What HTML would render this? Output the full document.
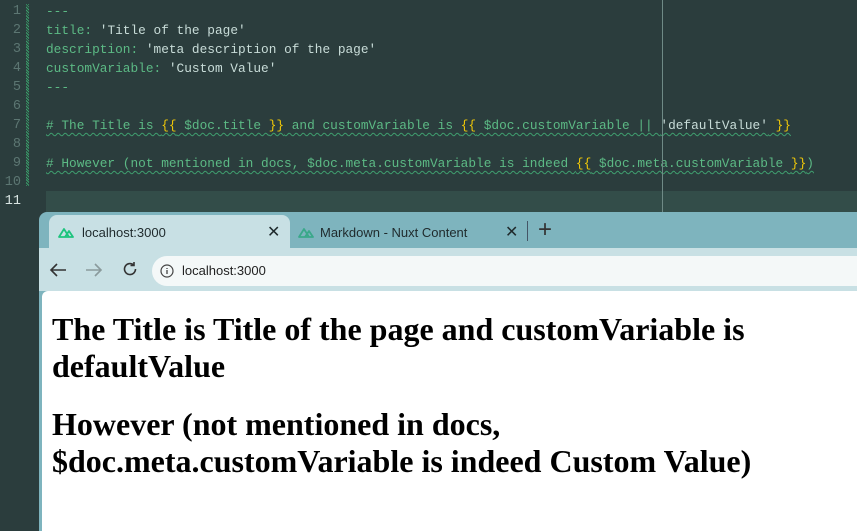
<!DOCTYPE html>
<html><head><meta charset="utf-8"><style>
*{margin:0;padding:0;box-sizing:border-box}
html,body{width:857px;height:531px;overflow:hidden}
body{background:#2b3d3d;position:relative;font-family:"Liberation Sans",sans-serif}
.ln{position:absolute;left:0;width:21px;text-align:right;font:13.5px/19px "Liberation Mono",monospace;color:#5c7672}
.code{position:absolute;left:46px;font:12.8px/19px "Liberation Mono",monospace;color:#5cba85;white-space:pre}
.s{color:#c8dcd8}.y{color:#f0c808}
.sq{text-decoration:underline wavy #3f9f6f;text-decoration-thickness:1px;text-underline-offset:3px}
.gut{position:absolute;left:26px;top:4px;width:3px;height:182px;background:repeating-linear-gradient(45deg,#3a9e6a 0 1px,#2b3d3d 1px 2px)}
.cur{position:absolute;left:46px;top:191px;width:811px;height:21px;background:#334d49}
.rul{position:absolute;left:662px;top:0;width:1px;height:212px;background:#6f8a86}
.win{position:absolute;left:39px;top:212px;width:818px;height:319px;background:#7eb4be;border-radius:8px 0 0 0;overflow:hidden}
.tab{position:absolute;left:10px;top:3px;width:241px;height:37px;background:#c8e0e4;border-radius:8px 8px 0 0;font-size:13px;color:#1f2a2c}
.bar{position:absolute;left:0;top:36px;width:818px;height:43px;background:#c8e0e4}
.url{position:absolute;left:113px;top:8px;width:720px;height:30px;background:#f4f8f8;border-radius:15px;font-size:13px;color:#222}
.content{position:absolute;left:3px;top:79px;width:815px;height:260px;background:#fff;border-radius:6px 0 0 0}
h1{font:bold 32px/37px "Liberation Serif",serif;color:#000;padding-left:10px;width:770px}
</style></head><body>
<div class="ln" style="top:2px">1</div><div class="ln" style="top:21px">2</div><div class="ln" style="top:40px">3</div><div class="ln" style="top:59px">4</div><div class="ln" style="top:78px">5</div><div class="ln" style="top:97px">6</div><div class="ln" style="top:116px">7</div><div class="ln" style="top:135px">8</div><div class="ln" style="top:154px">9</div><div class="ln" style="top:173px">10</div><div class="ln" style="top:192px;color:#d8e4e2">11</div>
<div class="gut"></div>
<div class="cur"></div>
<div class="code" style="top:2px">---
title: <span class="s">'Title of the page'</span>
description: <span class="s">'meta description of the page'</span>
customVariable: <span class="s">'Custom Value'</span>
---

<span class="sq"># The Title is <span class="y">{{</span> $doc.title <span class="y">}}</span> and customVariable is <span class="y">{{</span> $doc.customVariable || <span class="s">'defaultValue'</span> <span class="y">}}</span></span>

<span class="sq"># However (not mentioned in docs, $doc.meta.customVariable is indeed <span class="y">{{</span> $doc.meta.customVariable <span class="y">}}</span>)</span>
</div>
<div class="rul"></div>
<div class="win">
 <div class="tab">
  <svg style="position:absolute;left:9px;top:12px" width="16" height="11" viewBox="0 0 16 11"><path d="M1 10 L6 2 L11 10 Z M7 10 L11 4 L15 10 Z" fill="none" stroke="#1ec47e" stroke-width="1.8" stroke-linejoin="round"/></svg>
  <span style="position:absolute;left:33px;top:10px">localhost:3000</span>
  <span style="position:absolute;left:218px;top:7px;font-size:16px">✕</span>
 </div>
 <svg style="position:absolute;left:259px;top:15px" width="16" height="11" viewBox="0 0 16 11"><path d="M1 10 L6 2 L11 10 Z M7 10 L11 4 L15 10 Z" fill="none" stroke="#3aa88a" stroke-width="1.8" stroke-linejoin="round"/></svg>
 <span style="position:absolute;left:281px;top:13px;font-size:13px;color:#1f2a2c">Markdown - Nuxt Content</span>
 <span style="position:absolute;left:466px;top:10px;font-size:16px;color:#1f2a2c">✕</span>
 <div style="position:absolute;left:488px;top:9px;width:1px;height:20px;background:#456"></div>
 <span style="position:absolute;left:499px;top:4px;font-size:24px;font-weight:300;color:#333">+</span>
 <div class="bar">
  <svg style="position:absolute;left:10px;top:14px" width="18" height="16" viewBox="0 0 18 16"><path d="M17 8H2M8 2L2 8l6 6" fill="none" stroke="#333" stroke-width="1.6"/></svg>
  <svg style="position:absolute;left:46px;top:14px" width="18" height="16" viewBox="0 0 18 16"><path d="M1 8h15M10 2l6 6-6 6" fill="none" stroke="#8a9a9c" stroke-width="1.6"/></svg>
  <svg style="position:absolute;left:83px;top:13px" width="16" height="16" viewBox="0 0 16 16"><path d="M13.5 8A5.5 5.5 0 1 1 11.5 3.8M12 1v3.5H8.5" fill="none" stroke="#333" stroke-width="1.6"/></svg>
  <div class="url">
   <svg style="position:absolute;left:8px;top:8px" width="14" height="14" viewBox="0 0 14 14"><circle cx="7" cy="7" r="6" fill="none" stroke="#444" stroke-width="1.2"/><path d="M7 6v4M7 4v1" stroke="#444" stroke-width="1.3"/></svg>
   <span style="position:absolute;left:30px;top:7px">localhost:3000</span>
  </div>
 </div>
 <div class="content">
  <h1 style="padding-top:20px">The Title is Title of the page and customVariable is defaultValue</h1>
  <h1 style="padding-top:21px">However (not mentioned in docs, $doc.meta.customVariable is indeed Custom Value)</h1>
 </div>
</div>
</body></html>
